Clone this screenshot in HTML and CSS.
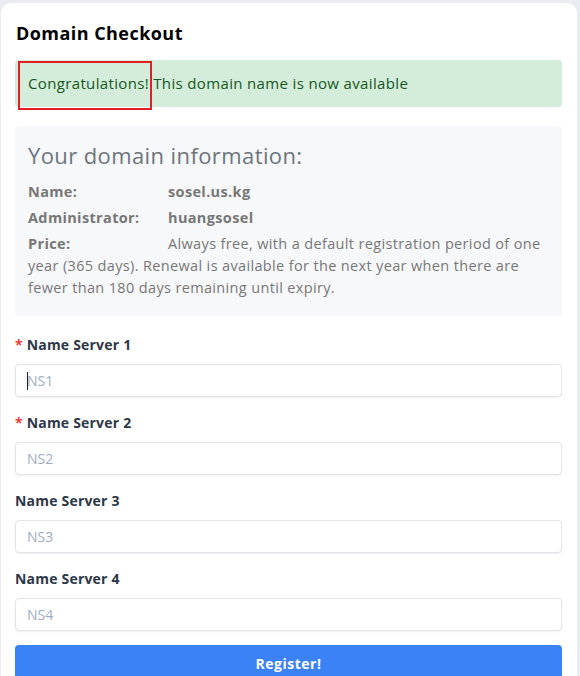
FILE: index.html
```html
<!DOCTYPE html>
<html lang="en">
<head>
<meta charset="utf-8">
<title>Domain Checkout</title>
<link rel="stylesheet" href="styles.css">
</head>
<body>
<div class="card">
  <h1 class="title">Domain Checkout</h1>
  <div class="alert">
    <span class="mark"></span>
    Congratulations! This domain name is now available
  </div>
  <div class="info">
    <h2 class="info-title">Your domain information:</h2>
    <div class="row"><span class="k">Name:</span><span class="v">sosel.us.kg</span></div>
    <div class="row"><span class="k">Administrator:</span><span class="v">huangsosel</span></div>
    <div class="row"><span class="k">Price:</span>Always free, with a default registration period of one year (365 days). Renewal is available for the next year when there are fewer than 180 days remaining until expiry.</div>
  </div>
  <form class="form">
    <label class="label"><span class="req">*</span> Name Server 1</label>
    <div class="field"><span class="caret"></span><input class="input" placeholder="NS1"></div>
    <label class="label"><span class="req">*</span> Name Server 2</label>
    <div class="field"><input class="input" placeholder="NS2"></div>
    <label class="label">Name Server 3</label>
    <div class="field"><input class="input" placeholder="NS3"></div>
    <label class="label">Name Server 4</label>
    <div class="field"><input class="input" placeholder="NS4"></div>
    <button type="button" class="btn">Register!</button>
  </form>
</div>
</body>
</html>
```
FILE: styles.css
```css
html, body {
  margin: 0;
  padding: 0;
  height: 100%;
  overflow: hidden;
}
body {
  background: #e9edf2;
  font-family: "Open Sans", "Liberation Sans", sans-serif;
}
.card {
  background: #fff;
  margin: 3px 0 0 1px;
  width: 576px;
  box-sizing: border-box;
  padding: 17px 15px 0 14px;
  border-radius: 10px 10px 0 0;
  min-height: 700px;
}
.title {
  margin: 0 0 14px 0;
  font-size: 18px;
  line-height: 26px;
  font-weight: 700;
  letter-spacing: 0.45px;
  color: #000;
  padding-left: 1px;
}
.alert {
  position: relative;
  background: #d4edda;
  color: #155724;
  border-radius: 4px;
  font-size: 15px;
  line-height: 23px;
  letter-spacing: 0.35px;
  padding: 12px 13px;
}
.mark {
  position: absolute;
  left: 3px;
  top: 1px;
  width: 130px;
  height: 45px;
  border: 2px solid #e31e24;
}
.info {
  margin-top: 19px;
  background: #f7f8fa;
  border-radius: 4px;
  padding: 14px 13px 17px 13px;
  color: #777;
  font-size: 14.5px;
  line-height: 22px;
  letter-spacing: 0.35px;
}
.info-title {
  margin: 0 0 11px 0;
  font-size: 22px;
  line-height: 30px;
  font-weight: 400;
  letter-spacing: 0.4px;
  color: #6c757d;
}
.row {
  margin-bottom: 4px;
}
.row:last-child {
  margin-bottom: 0;
}
.k {
  display: inline-block;
  width: 140px;
  font-weight: 700;
}
.v {
  font-weight: 700;
}
.form {
  margin-top: 19px;
  display: flex;
  flex-direction: column;
}
.label {
  font-size: 14px;
  line-height: 20px;
  font-weight: 700;
  letter-spacing: 0.2px;
  color: #2d3748;
  margin-bottom: 9px;
}
.req {
  color: #e53e3e;
}
.field {
  position: relative;
  margin-bottom: 16px;
}
.input {
  display: block;
  width: 100%;
  box-sizing: border-box;
  height: 33px;
  border: 1px solid #e2e4e8;
  border-radius: 4px;
  box-shadow: 0 1px 2px rgba(0,0,0,0.06);
  padding: 0 11px;
  font-family: inherit;
  font-size: 14px;
  color: #2d3748;
  background: #fff;
  outline: none;
}
.input::placeholder {
  color: #a0aec0;
}
.caret {
  position: absolute;
  left: 12px;
  top: 8px;
  width: 1px;
  height: 18px;
  background: #1a202c;
}
.btn {
  margin-top: -2px;
  height: 36px;
  border: none;
  border-radius: 4px;
  background: #3b82f6;
  color: #fff;
  font-family: inherit;
  font-size: 14px;
  font-weight: 700;
  letter-spacing: 0.5px;
}
```
